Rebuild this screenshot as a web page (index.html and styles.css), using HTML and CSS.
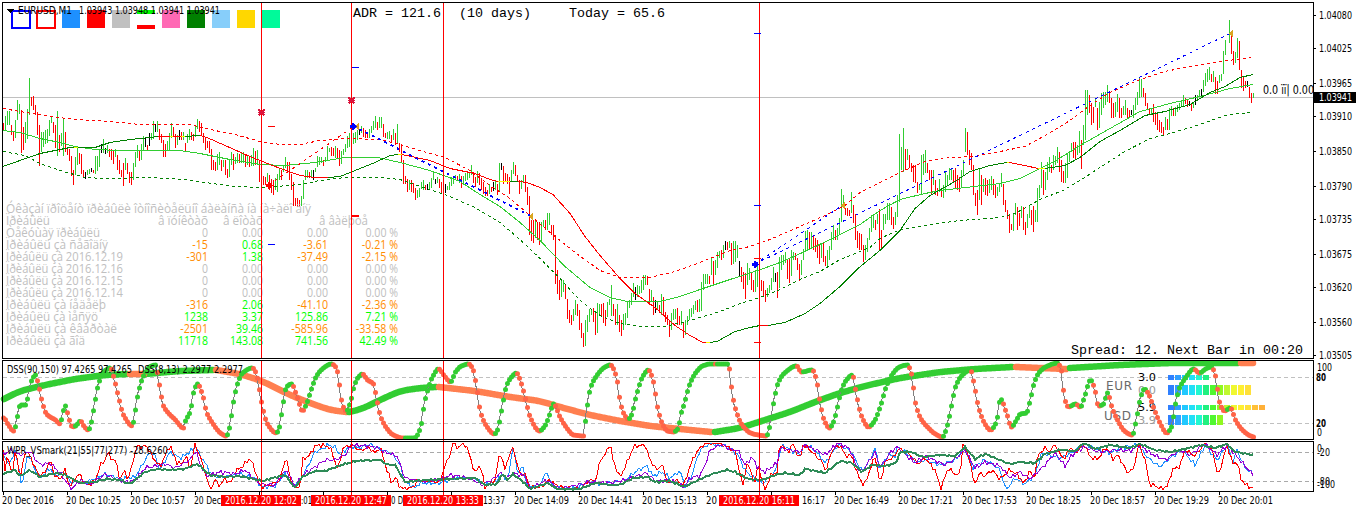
FILE: index.html
```html
<!DOCTYPE html>
<html lang="en">

<head>
  <meta charset="utf-8">
  <title>EURUSD,M1</title>
  <link rel="stylesheet" href="styles.css">
</head>

<body>

  <main class="terminal">
    <!-- Price chart -->
    <svg class="panel" id="price" width="1356" height="360" viewBox="0 0 1356 360">
      <path class="price-line" d="M3 97.5H1313"/>
      <g id="bars"></g>
      <g id="averages"></g>
      <g id="trades"></g>
      <g id="stats"></g>
      <g id="swatches"></g>
      <g id="marks"></g>
      <g class="mono">
        <text x="353" y="17" textLength="88">ADR = 121.6</text>
        <text x="459" y="17" textLength="72">(10 days)</text>
        <text x="569" y="17" textLength="96">Today = 65.6</text>
        <text x="1071" y="354" textLength="232">Spread: 12. Next Bar in 00:20</text>
      </g>
      <g class="label">
        <path d="M6 9h8l-4 4z"/>
        <text x="18" y="14" textLength="54" lengthAdjust="spacingAndGlyphs">EURUSD,M1</text>
        <text x="79" y="14" textLength="141" lengthAdjust="spacingAndGlyphs">1.03943 1.03948 1.03941 1.03941</text>
        <text class="profit" x="1263" y="94" textLength="51" lengthAdjust="spacingAndGlyphs">0.0 ïï| 0.00</text>
      </g>
      <path class="frame" d="M2.5 359V2.5H1313.5V359M2 358.5H1314"/>
      <g class="label" id="priceAxis"></g>
    </svg>

    <!-- DSS oscillator -->
    <svg class="panel" id="dss" width="1356" height="80" viewBox="0 360 1356 80">
      <path class="level" d="M3 377.5H1313M3 423.5H1313"/>
      <g id="scores"></g>
      <g id="band"></g>
      <g id="dots"></g>
      <g id="dssLines"></g>
      <g class="label">
        <text x="7" y="373" textLength="125" lengthAdjust="spacingAndGlyphs">DSS(90,150) 97.4265 97.4265</text>
        <text x="138" y="373" textLength="105" lengthAdjust="spacingAndGlyphs">DSS(8,13) 2.2977 2.2977</text>
        <text x="1317" y="371" textLength="15" lengthAdjust="spacingAndGlyphs">100</text>
        <text x="1316" y="381" class="strong" textLength="10" lengthAdjust="spacingAndGlyphs">80</text>
        <text x="1316" y="427" class="strong" textLength="10" lengthAdjust="spacingAndGlyphs">20</text>
        <text x="1317" y="436" textLength="5" lengthAdjust="spacingAndGlyphs">0</text>
      </g>
      <path class="frame" d="M2.5 360.5H1313.5V439.5H2.5Z"/>
    </svg>

    <!-- Williams percent range and time axis -->
    <svg class="panel" id="wpr" width="1356" height="72" viewBox="0 440 1356 72">
      <path class="level dark" d="M3 452.5H1313M3 481.5H1313"/>
      <g id="ranges"></g>
      <g id="wprLines"></g>
      <g class="label">
        <text x="7" y="454" textLength="161" lengthAdjust="spacingAndGlyphs">WPR_VSmark(21|55|77|277) -28.6260</text>
        <text x="1317" y="452" textLength="5" lengthAdjust="spacingAndGlyphs">0</text>
        <text x="1317" y="456" textLength="13" lengthAdjust="spacingAndGlyphs">-20</text>
        <text x="1317" y="485" textLength="13" lengthAdjust="spacingAndGlyphs">-80</text>
        <text x="1317" y="488" textLength="18" lengthAdjust="spacingAndGlyphs">-100</text>
      </g>
      <path class="frame" d="M2.5 441.5H1313.5V491.5H2.5Z"/>
      <g class="label" id="timeAxis"></g>
    </svg>
  </main>

  <script src="script.js"></script>

</body>

</html>
```
FILE: styles.css
```css
/* General reset and layout */
* {
  margin: 0;
  padding: 0;
  box-sizing: border-box;
}

body {
  background: #fff;
  overflow: hidden;
}

.terminal {
  display: flex;
  flex-direction: column;
  width: 1356px;
}

.panel {
  display: block;
  flex: none;
  shape-rendering: crispEdges;
}

.panel text {
  white-space: pre;
}

.frame {
  fill: none;
  stroke: #000;
}

.price-line {
  stroke: silver;
}

/* Text */
.label {
  font-family: 'DejaVu Sans Condensed', 'DejaVu Sans', sans-serif;
  font-stretch: condensed;
  font-size: 10.8px;
}

.profit {
  font-size: 11.5px;
}

.strong {
  font-weight: bold;
  font-size: 10px;
}

.mono {
  font-family: 'Liberation Mono', monospace;
  font-size: 13.33px;
}

.stat {
  font-family: 'Open Sans', sans-serif;
  font-size: 12px;
  fill: silver;
}

.stat.up {
  fill: lime;
}

.stat.down {
  fill: darkorange;
}

.currency {
  font-family: 'DejaVu Sans', sans-serif;
  font-size: 12px;
  fill: dimgray;
}

.faint {
  fill: #999;
}

.inverse {
  fill: #fff;
}

/* Chart lines */
.line {
  fill: none;
}

.dashed {
  stroke-dasharray: 3 3;
}

.trade {
  fill: none;
  stroke-dasharray: 3 4;
}

.trade.heavy {
  stroke-width: 1.8;
}

.cursor {
  stroke: red;
}

.level {
  stroke: silver;
  stroke-dasharray: 4 3;
}

.level.dark {
  stroke: darkgray;
}

.band {
  fill: none;
  stroke-width: 6.5;
  stroke-linecap: round;
  stroke-linejoin: round;
  shape-rendering: auto;
}

.stem {
  fill: none;
  stroke: gray;
}

.dot {
  shape-rendering: auto;
}
```
FILE: script.js
```js
const NS = 'http://www.w3.org/2000/svg';

function add(id, tag, attrs, text) {
  const el = document.createElementNS(NS, tag);
  for (const key in attrs) el.setAttribute(key, attrs[key]);
  if (text !== undefined) el.textContent = text;
  document.getElementById(id).appendChild(el);
  return el;
}

function rect(id, x, y, width, height, fill) {
  add(id, 'rect', { x, y, width, height, fill });
}

// "x,y x,y" -> [[x, y], ...]
function points(str) {
  return str.trim().split(/\s+/).map(p => p.split(',').map(Number));
}

// Value of the polyline at x
function at(pts, x) {
  for (let i = 1; i < pts.length; i++) {
    if (x <= pts[i][0]) {
      const [x0, y0] = pts[i - 1];
      const [x1, y1] = pts[i];
      return y0 + (y1 - y0) * (x - x0) / (x1 - x0);
    }
  }
  return pts[pts.length - 1][1];
}

// Slope at a knot, flat on peaks and troughs
function slope(pts, i) {
  if (i === 0 || i === pts.length - 1) return 0;
  const a = (pts[i][1] - pts[i - 1][1]) / (pts[i][0] - pts[i - 1][0]);
  const b = (pts[i + 1][1] - pts[i][1]) / (pts[i + 1][0] - pts[i][0]);
  return a * b <= 0 ? 0 : 2 * a * b / (a + b);
}

// Monotone curve through the knots
function curve(pts, x) {
  for (let i = 1; i < pts.length; i++) {
    if (x <= pts[i][0]) {
      const [x0, y0] = pts[i - 1];
      const [x1, y1] = pts[i];
      const h = x1 - x0;
      const t = (x - x0) / h;
      const u = 1 - t;
      return y0 * (1 + 2 * t) * u * u + y1 * t * t * (3 - 2 * t) +
        h * t * u * (slope(pts, i - 1) * u - slope(pts, i) * t);
    }
  }
  return pts[pts.length - 1][1];
}

// High-low bars: first x, then top-bottom pairs two pixels apart
const bars = [
  [3, '123-130 116-130 111-125 111-125 125-135 132-141 120-138 100-120 104-114 110-153 127-150 122-143 109-139 78-115 97-106 96-110 105-115 112-135 125-166 132-152 132-147 130-144 129-143 120-136 117-123 122-133 125-148'],
  [57, '111-156 135-152 133-146 119-156 132-152 148-155 149-161 156-176 170-185 157-175 148-165 153-164 154-174 170-178 172-179 170-175 169-174 168-172 170-173 156-174 156-171'],
  [99, '150-167 144-153 139-153 148-154 145-153 149-157 149-160 150-164 149-157 155-170 160-174 170-177 163-186 158-170 163-174 172-183 172-185 163-180 152-167 145-158 150-161 144-160 136-151 138-147 145-150'],
  [149, '133-146 133-140 121-139 124-132 121-132 129-140 134-143 140-157 144-157 141-151 133-150 123-138 127-137 134-148 135-145 130-140 132-140 132-140 143-151 134-143 129-140 132-140 134-141 125-137 119-129'],
  [199, '121-132 123-136 133-143 138-150 141-148 141-153 149-170 160-170 162-171 154-170 152-165 160-171 160-167 160-175 169-178 160-177 152-165 154-170 157-164 153-163 154-163 153-163 152-163 155-167 155-165'],
  [249, '157-167 155-166 148-166 151-165 150-165 160-182 164-182 176-185 177-185 173-182 175-190 179-193 180-195 178-190 174-192 168-180 170-180 166-172 157-168 162-173 162-180 174-190 182-206 198-206 198-207'],
  [299, '200-207 196-206 180-199 170-180 170-178 172-178 170-178 170-180 168-172 156-167 157-165 157-163 160-166 157-162 146-160 148-152 147-156 148-156 146-158 148-158 150-166'],
  [341, '151-164 149-155 144-152 136-148 133-147 133-154 133-144 132-143 130-140 130-135 126-133 128-137 130-138 133-138 129-138 126-133 121-130 116-128 122-130 117-128 117-128 124-137 133-138 132-139 131-139'],
  [391, '135-142 129-140 133-145 124-143 143-152 145-162 160-184 176-184 179-192 180-190 180-192 183-193 188-200 190-198 188-197 182-189 180-190 185-190 184-190 182-190 178-188 172-180 179-184 177-183 179-188'],
  [441, '182-194 188-193 184-193 186-190 182-190 177-186 177-184 175-180 176-181 174-183 176-188 176-185 173-181 172-180 173-178 165-175 172-183 177-187 171-183 173-185 178-190 182-194 187-196 190-196 184-194'],
  [491, '187-192 182-191 180-190 184-195 163-192 163-170 166-184 173-182 174-184 177-194 170-181 162-174 165-176 175-182 180-194 180-189 175-183 175-192 187-205'],
  [529, '196-235 220-241 220-243 220-238 222-240 222-245 222-243 220-227 220-230 213-230 213-225 225-235 225-240 235-284 270-294 280-300 280-297 280-292 285-299 299-319 310-323 315-325 309-321 300-315 304-316'],
  [579, '310-330 323-338 333-347 320-346 315-332 309-322 309-315 308-322 313-335 303-333 304-315 304-317 303-323 310-326 302-317 299-305 285-316 304-316 309-325 304-325 315-332 320-336 314-330 313-325 302-318'],
  [629, '300-308 293-305 283-297 287-300 285-297 286-294 280-293 275-290 275-285 276-285 289-305 290-302 297-315 300-313 302-310 305-313 294-315 297-315 312-322 315-325 320-337 313-330 309-320 309-319 308-325'],
  [679, '316-325 311-325 322-338 320-335 316-325 309-320 308-317 305-314 301-310 300-312 299-312 282-311 274-290 274-284 274-284 276-284 258-275 261-285 260-275 252-268 251-258 250-260 245-258 241-250 242-250'],
  [729, '241-248 243-265 241-264 241-262 245-258 261-277 267-282 272-289 273-299 263-285 268-280 273-290 280-292 270-292 262-287 265-285 280-291 281-297 290-302 288-297 285-293 278-290 267-282 273-282 272-298'],
  [779, '257-288 255-270 255-265 252-263 260-279 259-283 250-276 252-260 253-260 258-270 264-281 260-275 249-260 231-252 230-250 232-250 232-248 236-250 238-252 240-258 245-264 243-258 243-262 256-266 250-266'],
  [829, '246-260 232-250 225-240 230-240 228-240 218-235 189-222 195-207 208-215 208-216 210-216 192-213 205-223 214-240 231-248 233-250 234-250 245-262 245-260 238-252 228-240 215-232 216-228 220-230 214-224'],
  [879, '209-250 230-248 214-230 214-224 203-220 203-220 207-225 217-229 212-225 195-217 134-202 147-170 128-172 149-170 149-160 155-168 163-172 165-182 165-183 182-193 185-190 155-195 154-175 150-173 163-173'],
  [929, '170-180 170-195 170-185 180-195 188-196 179-192 190-197 185-198 172-192 175-185 168-180 168-180 170-182 168-188 175-190 177-192 170-188 160-175 128-152 132-155 150-165 153-170 165-195 193-206 190-215'],
  [979, '168-200 175-205 179-192 178-195 180-196 179-193 176-190 179-195 185-198 187-196 183-192 173-187 184-205 200-212 210-219 215-233 224-230 214-231 203-215 207-230 213-226 206-218 207-230 222-235 214-228'],
  [1029, '205-218 210-225 206-232 210-222 188-222 185-198 162-188 170-195 172-190 162-180 157-172 165-173 155-170 156-165 147-163 152-172 160-182 171-183 163-183 154-178 152-162 143-152 142-158 142-160 145-155'],
  [1079, '131-153 140-169 125-145 90-140 90-115 95-113 103-125 107-123 98-107 108-130 102-128 93-115 92-108 92-105 85-102 93-103 98-118 103-118 102-117 94-112 98-118 108-118 106-115 100-115 108-118'],
  [1129, '110-118 110-115 105-118 98-110 92-105 78-98 79-97 88-97 93-106 103-110 108-115 108-115 104-122 112-125 113-130 120-132 122-133 127-135 117-130 119-130 108-130 106-116 108-116 107-116 105-112'],
  [1179, '103-110 100-106 95-106 98-104 99-107 101-106 103-111 102-108 95-105 95-100 90-97 89-98 80-92 73-86 69-82 67-80 74-82 71-82 77-94 81-94 75-83 74-81 51-74 40-55'],
  [1229, '20-43 36-54 51-65 52-63 38-58 41-70 70-88 77-91 81-88 81-87 87-98 93-103 93-98']
];

const dojis = [85, 91, 101, 105, 145, 149, 155, 179, 313, 359, 427, 435, 445, 493, 501, 635, 655, 725, 739, 775, 1131, 1189, 1195, 1201, 1247];
let previous = 126;
bars.forEach(([start, list]) => {
  list.split(' ').forEach((pair, i) => {
    const x = start + i * 2;
    const [top, bottom] = pair.split('-').map(Number);
    const mid = (top + bottom) / 2;
    let fill = mid <= previous ? 'limegreen' : 'red';
    if (dojis.includes(x)) fill = 'black';
    rect('bars', x, top, 1, bottom - top, fill);
    previous = mid;
  });
});

// Moving averages and channel
const averages = [
  ['red', 'dashed', '3,108 20,111 50,116 75,119 110,121 140,124 190,124 210,129 235,134 260,141 280,144 300,144 320,140 345,138 380,139 400,144 420,150 445,157 470,170 490,185 510,198 530,215 555,236 575,252 600,270 620,277 650,277 675,271 700,262 730,250 750,246 770,239 800,226 825,215 845,205 860,192 880,182 900,172 925,161 950,157 975,156 1000,151 1025,146 1045,135 1070,120 1090,105 1110,92 1140,79 1165,71 1190,66 1220,61 1253,57'],
  ['green', 'dashed', '3,151 25,155 40,163 60,170 85,177 105,178 150,177 185,179 205,182 235,186 265,187 300,184 320,180 345,177 380,177 400,179 420,186 445,194 475,207 500,222 520,239 540,258 560,278 580,300 600,315 620,323 640,326 665,326 690,320 720,311 740,303 760,297 780,289 800,279 820,271 840,259 870,247 880,238 900,229 930,224 960,220 1000,217 1015,213 1040,199 1063,190 1080,180 1100,167 1125,151 1150,138 1170,133 1200,124 1225,115 1240,113 1253,112'],
  ['limegreen', '', '3,130 20,132 40,138 60,142 75,146 95,149 120,150 180,150 200,153 230,159 260,164 285,165 315,162 345,157 378,157 400,162 430,170 460,181 480,194 500,206 520,222 540,240 565,266 590,287 610,297 627,301 660,301 680,296 700,289 730,279 755,271 780,262 805,251 830,239 860,224 880,210 900,199 925,193 940,190 1000,183 1020,178 1040,168 1056,160 1080,145 1110,128 1140,111 1170,103 1200,96 1230,88 1253,84'],
  ['green', '', '3,166 20,160 40,153 70,147 74,147'],
  ['yellow', '', '74,147 78,147'],
  ['green', '', '78,147 95,147 110,142 130,139 150,137 158,136'],
  ['red', '', '158,136 170,136'],
  ['yellow', '', '170,136 173,136'],
  ['red', '', '173,136 181,136'],
  ['yellow', '', '181,136 185,136'],
  ['green', '', '185,136 200,135'],
  ['red', '', '200,135 207,137 225,145 250,156 275,166 300,175 315,177 328,177'],
  ['green', '', '328,177 340,176 355,170 375,162 390,155 398,154'],
  ['yellow', '', '398,154 402,154'],
  ['red', '', '402,154 430,160 450,168 475,173 490,179 498,181'],
  ['yellow', '', '498,181 510,181'],
  ['green', '', '510,181 518,181'],
  ['red', '', '518,181 527,182 540,187 553,194 570,213 585,236 600,255 620,278 635,293 655,307 675,325 690,335 703,342 706,342'],
  ['yellow', '', '706,342 710,342'],
  ['green', '', '710,342 717,341 735,331 750,327 760,325'],
  ['red', '', '760,325 768,325'],
  ['green', '', '768,325 785,322 805,313 820,303 840,286 858,268 881,249 900,230 915,208 930,195 955,181 970,171 990,165 1007,162'],
  ['yellow', '', '1007,162 1009,162'],
  ['red', '', '1009,162 1025,165 1038,168'],
  ['yellow', '', '1038,168 1045,168'],
  ['green', '', '1045,168 1065,165 1080,157 1100,141 1120,130 1145,115 1165,111 1190,104 1210,92 1225,86 1240,77 1253,74']
];
averages.forEach(([stroke, type, pts]) => {
  add('averages', 'polyline', { class: 'line ' + type, stroke, points: pts, transform: 'translate(0 .5)' });
});

// Trades
[['red', '', '269,185 353,127'], ['blue', 'heavy', '353,126 531,216'], ['blue', '', '755,264 843,205'], ['blue', '', '755,264 1231,33']].forEach(([stroke, weight, pts]) => {
  add('trades', 'polyline', { class: 'trade ' + weight, stroke, points: pts });
});
[[357, 126], [531, 216], [843, 205], [1231, 33]].forEach(([x, y]) => {
  add('marks', 'path', { d: `M${x - 2} ${y + .5}l4 -4v8z`, fill: 'goldenrod' });
});

// Profit table
const rows = [
  ['Ïðèáûëü', 44, 'â ïóíêòàõ', 'â ëîòàõ', '', ''],
  ['Òåêóùàÿ ïðèáûëü', 94, '0', '0.00', '0.00', '0.00 %'],
  ['Ïðèáûëü çà ñåãîäíÿ', 102, '-15', '0.68', '-3.61', '-0.21 %', 'down'],
  ['Ïðèáûëü çà 2016.12.19', 117, '-301', '1.38', '-37.49', '-2.15 %', 'down'],
  ['Ïðèáûëü çà 2016.12.16', 117, '0', '0.00', '0.00', '0.00 %'],
  ['Ïðèáûëü çà 2016.12.15', 117, '0', '0.00', '0.00', '0.00 %'],
  ['Ïðèáûëü çà 2016.12.14', 117, '0', '0.00', '0.00', '0.00 %'],
  ['Ïðèáûëü çà íåäåëþ', 100, '-316', '2.06', '-41.10', '-2.36 %', 'down'],
  ['Ïðèáûëü çà ìåñÿö', 92, '1238', '3.37', '125.86', '7.21 %', 'up'],
  ['Ïðèáûëü çà êâàðòàë', 111, '-2501', '39.46', '-585.96', '-33.58 %', 'down'],
  ['Ïðèáûëü çà ãîä', 79, '11718', '143.08', '741.56', '42.49 %', 'up']
];

function stat(x, y, text, width, tone) {
  add('stats', 'text', { class: 'stat ' + (tone || ''), x, y, textLength: width, lengthAdjust: 'spacingAndGlyphs' }, text);
}

function numberWidth(text) {
  const widths = { '.': 3, '-': 3.7, ' ': 3, '%': 8.5 };
  return [...text].reduce((sum, c) => sum + (widths[c] || 6), 0);
}

stat(6, 213, 'Óêàçàí ïðîöåíò ïðèáûëè îòíîñèòåëüíî áàëàíñà íà íà÷àëî äíÿ', 305);
stat(319, 225, 'â âàëþòå', 49);
rows.forEach((row, i) => {
  const y = 225 + i * 12;
  const tone = row[6];
  stat(6, y, row[0], row[1]);
  if (i === 0) {
    stat(158, y, row[2], 50);
    stat(223, y, row[3], 40);
    return;
  }
  [208, 263, 328, 398].forEach((right, k) => {
    const width = numberWidth(row[k + 2]);
    // lots are never negative
    const color = k === 1 && tone ? 'up' : tone;
    stat(right - width, y, row[k + 2], width, color);
  });
});

// Colour buttons
[['blue', 11], ['red', 36]].forEach(([stroke, x]) => {
  add('swatches', 'rect', { x: x + 1, y: 11, width: 18, height: 17, fill: 'none', stroke, 'stroke-width': 2 });
});
[['dodgerblue', 62], ['red', 87], ['silver', 112], ['hotpink', 162], ['green', 187], ['lightskyblue', 212], ['gold', 237], ['mediumspringgreen', 262]].forEach(([fill, x]) => {
  rect('swatches', x, 10, 18, 18, fill);
});
rect('swatches', 137, 10, 18, 4, 'lime');
rect('swatches', 137, 25, 18, 4, 'red');

// Vertical lines on every panel
[261, 351, 443, 759].forEach(x => {
  add('marks', 'path', { class: 'cursor', d: `M${x + .5} 3V358` });
  add('dssLines', 'path', { class: 'cursor', d: `M${x + .5} 360V440` });
  add('wprLines', 'path', { class: 'cursor', d: `M${x + .5} 440V495` });
});

// Range and order marks
rect('marks', 268, 126, 7, 1, 'red');
rect('marks', 268, 244, 7, 1, 'blue');
rect('marks', 352, 67, 7, 1, 'blue');
rect('marks', 352, 215, 7, 2, 'red');
rect('marks', 754, 33, 7, 1, 'blue');
rect('marks', 754, 205, 7, 1, 'blue');
rect('marks', 754, 258, 7, 1, 'red');
rect('marks', 754, 342, 7, 1, 'red');
[[261, 112], [351, 100]].forEach(([x, y]) => {
  add('marks', 'path', { d: `M${x - 2.5} ${y - 2.5}l6 6m0 -6l-6 6M${x - 3} ${y + .5}h7`, stroke: 'crimson', 'stroke-width': 1.6 });
});
[[269, 185, 'red'], [353, 126, 'blue'], [755, 264, 'blue']].forEach(([x, y, fill]) => {
  add('marks', 'path', { d: `M${x - 3} ${y - 1}h2v-2h2l3 3.5l-3 3.5h-2v-2h-2z`, fill });
});

// Price axis
[['1.04080', 15], ['1.04025', 48], ['1.03965', 83], ['1.03910', 116], ['1.03850', 151], ['1.03790', 186], ['1.03735', 219], ['1.03675', 254], ['1.03620', 287], ['1.03560', 322], ['1.03505', 355]].forEach(([text, y]) => {
  rect('priceAxis', 1314, y, 2, 1, 'black');
  add('priceAxis', 'text', { x: 1319, y: y + 4, textLength: 33, lengthAdjust: 'spacingAndGlyphs' }, text);
});
rect('priceAxis', 1313, 92, 43, 11, 'black');
add('priceAxis', 'text', { class: 'inverse', x: 1319, y: 101, textLength: 33, lengthAdjust: 'spacingAndGlyphs' }, '1.03941');

// Slow DSS band
[
  ['limegreen', '4,399 20,391 45,385 75,379 105,375 127,374'],
  ['limegreen', '145,374 180,371 213,370'],
  ['coral', '130,374 144,374'],
  ['coral', '216,370 240,374 262,381 290,395 310,403 330,410 346,412'],
  ['limegreen', '349,412 362,409 380,400 400,391 420,388 436,387'],
  ['coral', '439,387 475,391 510,397 540,401 560,407 590,415 620,421 650,426 680,429 711,432'],
  ['limegreen', '715,432 740,428 765,420 790,412 815,402 840,393 865,386 900,378 940,372 975,369 1012,367'],
  ['coral', '1016,367 1066,369'],
  ['limegreen', '1070,368 1120,365 1170,363 1238,363'],
  ['coral', '1241,363 1253,363']
].forEach(([stroke, str]) => {
  const knots = points(str);
  const out = [];
  for (let x = knots[0][0]; x <= knots[knots.length - 1][0]; x++) out.push([x, at(knots, x)]);
  // running mean keeps the joints soft
  const soft = out.map(([x, y], i) => {
    const n = Math.min(8, i, out.length - 1 - i);
    const part = out.slice(i - n, i + n + 1);
    return [x, (part.reduce((sum, p) => sum + p[1], 0) / part.length).toFixed(2)];
  });
  add('band', 'polyline', { class: 'band', stroke, points: soft.join(' ') });
});

// Fast DSS
const fast = points(`3,418 8,425 13,431 16,423 18,410 20,405 25,405 27,399 31,381 35,375 38,385 42,403 46,414 50,417 55,420 60,424 62,414 65,406 68,417 72,427 75,426 80,421 84,427 88,430 90,426
  94,405 98,384 104,371 110,368 114,380 118,397 123,415 132,426 134,416 138,392 143,376 149,367 155,365 159,385 163,406 167,412 175,420 183,428 185,421 190,411 193,393 197,384 203,398 206,412 212,423 220,433 226,436
  229,428 233,402 237,384 242,373 252,368 256,374 258,384 262,407 267,424 276,433 279,427 282,408 286,387 291,384 297,398 302,411 306,404 311,389 316,376 323,368 331,364 336,368 339,385 342,405 346,411 350,402
  354,385 358,377 362,374 367,380 373,384 376,398 380,416 386,428 393,435 402,438 414,438 420,428 424,403 427,391 432,377 438,369 444,376 450,382 455,372 461,366 468,364 472,368 476,386 480,412 486,426 494,434 497,430
  501,411 506,386 511,377 516,373 521,384 525,399 530,418 539,431 545,425 549,415 553,404 560,418 567,429 573,435 583,436 586,412 590,388 596,376 603,368 610,365 616,377 620,403 624,415 628,419 631,415 636,395 642,377
  648,370 653,382 657,407 662,424 667,431 673,432 678,428 680,416 684,403 689,385 695,373 702,366 710,364 728,364 730,378 732,395 736,412 741,424 750,433 758,435 766,436 770,423 774,398 778,382 784,373 796,366 801,372 812,370
  816,380 820,405 824,421 829,428 833,422 837,407 841,390 846,380 852,375 856,395 861,416 868,427 874,421 880,406 886,386 892,374 899,367 907,365 911,374 915,403 920,418 928,428 935,434 942,437 947,425 951,406 955,387
  961,376 970,370 974,386 978,407 984,423 990,430 996,422 1000,399 1006,413 1011,427 1016,420 1020,414 1026,413 1030,399 1034,382 1039,372 1047,366 1057,363 1061,371 1064,398 1068,407 1075,404 1080,407 1084,397 1090,380
  1094,388 1098,406 1103,404 1107,393 1112,409 1117,420 1124,431 1132,435 1136,419 1140,398 1144,389 1148,394 1154,410 1160,424 1166,433 1171,427 1175,404 1179,388 1185,378 1193,369 1199,373 1205,369 1211,367 1215,376 1219,402 1224,411
  1230,408 1235,420 1242,430 1250,436 1254,437`);
const samples = [];
for (let x = 3; x <= 1253; x += 2) samples.push([x, curve(fast, x)]);
add('dots', 'polyline', { class: 'stem', points: samples.join(' ') });
samples.forEach(([x, y], i) => {
  const rising = i > 0 && y <= samples[i - 1][1];
  add('dots', 'circle', { class: 'dot', cx: x + .5, cy: y, r: 2.5, fill: rising ? 'limegreen' : 'tomato' });
});

// Currency strength
const heat = ['#2f80ff', '#2f9fff', '#20c8ff', '#20e0f8', '#20f8d0', '#20f080', '#50f830', '#90f820', '#c0f830', '#f0f830', '#fff030', '#ffe038', '#ffc038', '#ffb038'];
[[375, 5, 6], [385, 10, 12], [405, 5, 14], [415, 10, 8]].forEach(([y, height, count]) => {
  for (let i = 0; i < count; i++) rect('scores', 1168 + i * 7, y, 6, height, heat[i]);
});
add('scores', 'text', { class: 'currency', x: 1106, y: 390, textLength: 26 }, 'EUR');
add('scores', 'text', { class: 'currency', x: 1104, y: 420, textLength: 27 }, 'USD');
[['3.0', 381, ''], ['0.0', 394, 'faint'], ['5.9', 411, ''], ['3.9', 424, 'faint']].forEach(([text, y, tone]) => {
  add('scores', 'text', { class: 'label ' + tone, x: 1138, y, textLength: 18, lengthAdjust: 'spacingAndGlyphs' }, text);
});

// Percent range lines
const ranges = [
  ['dodgerblue', 1, '3,455 10,465 15,450 22,486 28,453 35,470 40,478 50,468 55,476 65,472 70,482 85,483 105,474 120,479 135,477 150,452 155,456 160,470 170,452 180,458 190,452 196,446 200,455 207,466 212,476 225,477 240,474 255,478 262,487 275,486 285,474 294,486 302,477 310,462 315,452 322,449 327,445 335,447 340,455 350,446 360,448 370,444 382,450 392,453 400,465 405,482 415,488 420,483 440,483 455,478 475,478 485,485 496,481 502,474 508,480 513,446 518,475 522,465 528,488 540,484 547,472 552,486 575,489 590,481 600,484 615,482 625,480 638,470 647,466 653,476 662,472 670,478 680,471 685,486 690,480 695,465 700,450 710,443 730,448 738,455 745,470 750,475 762,484 775,472 782,445 800,455 805,444 815,450 825,463 838,445 850,450 862,471 870,460 875,448 880,470 888,455 895,456 898,446 910,456 917,463 925,460 940,465 955,460 965,448 972,468 985,460 992,464 1000,470 1006,490 1015,478 1025,484 1035,475 1042,453 1060,458 1072,453 1084,444 1100,450 1110,453 1120,448 1138,445 1148,458 1160,467 1170,458 1182,450 1195,465 1205,445 1217,460 1227,445 1233,462 1237,450 1245,468 1253,474'],
  ['red', 1, '3,450 5,470 8,455 12,475 16,448 20,480 25,452 30,455 35,468 40,476 45,472 50,460 55,476 60,479 65,470 70,488 75,478 80,474 85,485 90,484 95,482 100,466 105,460 108,452 112,460 116,461 120,480 125,470 128,482 132,464 138,444 142,448 146,445 152,456 160,467 165,456 170,445 177,463 182,464 186,455 190,470 195,445 200,456 206,475 210,490 215,480 220,486 225,478 230,484 237,470 243,466 250,458 255,470 260,487 270,485 280,480 286,456 290,478 294,487 300,487 303,459 310,455 315,446 322,445 330,447 338,470 343,448 352,445 360,451 368,447 375,453 380,447 387,470 392,484 395,477 400,487 405,489 412,488 418,480 425,481 440,482 444,468 450,455 453,443 458,448 464,443 468,450 475,473 480,464 485,487 495,480 500,451 505,470 508,458 513,448 520,475 525,474 530,488 540,487 550,480 557,486 565,488 580,489 590,480 596,481 600,460 605,455 610,443 613,460 620,478 628,460 634,446 645,445 650,460 657,470 662,464 668,484 675,480 684,485 690,466 695,455 700,448 705,443 720,443 735,451 743,486 747,463 755,482 758,465 765,490 771,475 777,472 780,443 788,452 793,444 800,460 803,445 808,448 815,455 822,462 826,471 832,450 840,445 845,455 852,456 857,473 864,486 870,470 875,456 880,484 885,462 895,456 898,448 910,455 918,464 925,458 935,470 941,489 948,468 955,474 960,475 963,444 970,460 974,485 980,473 985,476 992,470 1000,479 1010,470 1018,475 1024,484 1030,470 1034,480 1038,455 1045,448 1050,452 1055,444 1060,455 1065,458 1070,447 1075,452 1080,449 1084,443 1090,457 1098,459 1106,447 1113,459 1118,455 1127,472 1133,470 1139,444 1145,460 1150,486 1155,485 1160,489 1168,486 1172,470 1180,466 1185,450 1195,456 1205,443 1213,452 1218,477 1227,445 1233,464 1238,462 1240,478 1248,487 1254,487'],
  ['darkviolet', 1, '3,455 10,450 20,455 30,451 36,460 40,465 50,463 60,473 68,484 72,489 80,480 90,485 105,474 115,479 125,482 135,480 145,468 155,466 165,464 175,468 190,460 196,450 200,465 207,476 220,472 235,474 245,470 260,484 275,485 286,470 295,486 303,475 315,467 325,460 335,460 345,455 352,445 375,447 385,452 397,456 405,478 420,481 440,480 450,475 470,478 482,485 495,478 500,473 508,478 513,473 525,476 530,489 547,480 560,489 590,482 610,483 625,480 640,475 647,473 655,481 670,480 684,487 690,478 700,476 705,465 710,450 722,444 730,450 738,450 745,465 752,457 758,468 765,472 777,463 780,448 800,452 805,445 820,452 825,455 838,443 850,449 857,468 862,472 875,452 880,468 890,453 897,447 915,463 925,456 945,465 955,459 965,450 975,468 985,462 1000,466 1010,478 1020,472 1030,479 1045,465 1055,453 1065,466 1072,455 1084,447 1100,452 1115,450 1130,451 1140,445 1150,453 1165,460 1180,450 1190,455 1205,444 1217,455 1227,445 1240,460 1254,476'],
  ['seagreen', 2, '3,474 15,470 20,476 30,470 40,477 55,473 65,475 80,483 95,482 105,479 120,480 130,484 145,472 158,469 170,470 185,469 197,464 210,475 225,477 240,476 262,481 285,475 295,488 302,477 315,471 325,471 345,464 355,461 380,460 388,465 395,465 405,482 425,480 450,479 475,478 485,485 497,484 502,474 508,480 513,474 522,481 530,489 548,483 557,489 580,489 595,483 610,485 620,485 633,478 647,477 655,482 670,481 684,487 690,484 705,477 715,473 728,470 735,472 748,479 762,480 775,475 785,473 800,475 805,469 825,473 840,461 852,463 862,472 872,465 885,466 896,463 900,452 912,452 922,457 940,455 955,456 965,447 975,459 985,454 1000,460 1010,464 1020,462 1035,463 1045,454 1060,450 1075,451 1084,443 1095,449 1110,445 1130,448 1140,444 1155,450 1170,452 1185,449 1200,445 1215,448 1227,444 1235,452 1254,455']
];
ranges.forEach(([stroke, width, str], n) => {
  const line = points(str);
  const out = [];
  for (let x = 3; x <= 1253; x += 2) {
    const tick = Math.sin(x * 1.9 + n) * Math.sin(x * .37 + n * 2) * (width === 2 ? 1 : 2.5);
    out.push([x, Math.min(490, Math.max(443, at(line, x) + tick)).toFixed(1)]);
  }
  add('ranges', 'polyline', { class: 'line', stroke, 'stroke-width': width, points: out.join(' ') });
});

// Time axis
for (let x = 3; x < 1250; x += 64) rect('timeAxis', x, 492, 1, 3, 'black');
[
  ['20 Dec 2016', 2, 52], ['20 Dec 10:25', 66, 55], ['20 Dec 10:57', 130, 55], ['20 Dec', 194, 27], [':01', 301, 11],
  ['0 D', 391, 12], ['13:37', 483, 22], ['20 Dec 14:09', 514, 55], ['20 Dec 14:41', 578, 55], ['20 Dec 15:13', 642, 55],
  ['20', 706, 11], ['16:17', 802, 23], ['20 Dec 16:49', 834, 55], ['20 Dec 17:21', 898, 55], ['20 Dec 17:53', 962, 55],
  ['20 Dec 18:25', 1026, 55], ['20 Dec 18:57', 1090, 55], ['20 Dec 19:29', 1154, 55], ['20 Dec 20:01', 1218, 55]
].forEach(([text, x, width]) => {
  add('timeAxis', 'text', { x, y: 504, textLength: width, lengthAdjust: 'spacingAndGlyphs' }, text);
});
[[221, '12:02'], [311, '12:47'], [403, '13:33'], [719, '16:11']].forEach(([x, time]) => {
  rect('timeAxis', x, 495, 80, 11, 'red');
  add('timeAxis', 'text', { class: 'inverse', x: x + 4, y: 504, textLength: 72, lengthAdjust: 'spacingAndGlyphs' }, '2016.12.20 ' + time);
});
```
